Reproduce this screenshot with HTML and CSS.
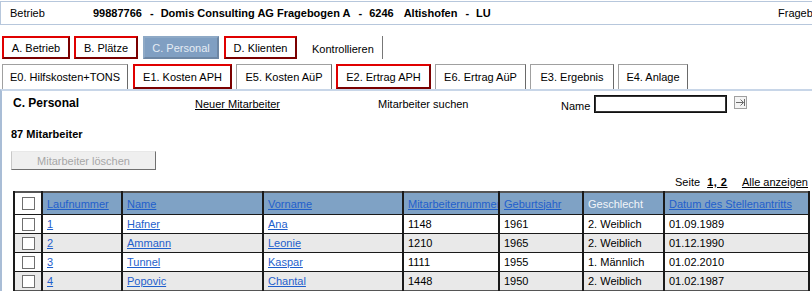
FILE: index.html
```html
<!DOCTYPE html>
<html lang="de">
<head>
    <meta charset="UTF-8">
    <title>C. Personal</title>
    <link rel="stylesheet" href="styles.css">
</head>
<body>
    <!-- Betrieb header -->
    <div class="topbar">
        <span class="top-label">Betrieb</span>
        <span class="top-info">
            <span>99887766</span><span class="sep">-</span><span>Domis Consulting AG Fragebogen A</span><span class="sep">-</span><span class="plz">6246</span><span>Altishofen</span><span class="sep">-</span><span>LU</span>
        </span>
        <span class="top-right">Fragebogen</span>
    </div>

    <!-- main tabs -->
    <div class="nav">
        <a class="tab tab-red tab-betrieb">A. Betrieb</a>
        <a class="tab tab-red tab-plaetze">B. Plätze</a>
        <a class="tab tab-active tab-personal">C. Personal</a>
        <a class="tab tab-red tab-klienten">D. Klienten</a>
        <a class="tab tab-plain">Kontrollieren</a>
    </div>

    <!-- sub tabs -->
    <div class="subnav">
        <a class="subtab sub-e0">E0. Hilfskosten+TONS</a>
        <a class="subtab subtab-red sub-e1">E1. Kosten APH</a>
        <a class="subtab sub-e5">E5. Kosten AüP</a>
        <a class="subtab subtab-red sub-e2">E2. Ertrag APH</a>
        <a class="subtab sub-e6">E6. Ertrag AüP</a>
        <a class="subtab sub-e3">E3. Ergebnis</a>
        <a class="subtab sub-e4">E4. Anlage</a>
    </div>

    <div class="panel">
        <div class="toolbar">
            <span class="title">C. Personal</span>
            <a class="plain-link" href="#">Neuer Mitarbeiter</a>
            <span>Mitarbeiter suchen</span>
            <span class="search">
                <label for="name">Name</label>
                <input type="text" id="name">
                <button class="go" type="button">
                    <svg width="13" height="13" viewBox="0 0 13 13">
                        <rect x="0.5" y="0.5" width="12" height="12" fill="#f4f4f4" stroke="#a0a0a0"/>
                        <path d="M2 6.5h7.5M6.5 3.5l3 3-3 3M10.5 3v7" fill="none" stroke="#6a6a6a" stroke-width="1"/>
                    </svg>
                </button>
            </span>
        </div>

        <div class="count">87 Mitarbeiter</div>

        <button class="delete" type="button" disabled>Mitarbeiter löschen</button>

        <div class="pager">
            Seite <a class="plain-link pages" href="#">1, 2</a>
            <a class="plain-link all" href="#">Alle anzeigen</a>
        </div>

        <table class="staff">
            <colgroup>
                <col class="w-check">
                <col class="w-lauf">
                <col class="w-name">
                <col class="w-vor">
                <col class="w-nr">
                <col class="w-jahr">
                <col class="w-ges">
                <col>
            </colgroup>
            <thead>
                <tr>
                    <th class="check"><span class="box"></span></th>
                    <th><a href="#">Laufnummer</a></th>
                    <th><a href="#">Name</a></th>
                    <th><a href="#">Vorname</a></th>
                    <th><a href="#">Mitarbeiternummer</a></th>
                    <th><a href="#">Geburtsjahr</a></th>
                    <th>Geschlecht</th>
                    <th><a href="#">Datum des Stellenantritts</a></th>
                </tr>
            </thead>
            <tbody>
                <tr>
                    <td class="check"><span class="box"></span></td>
                    <td><a href="#">1</a></td>
                    <td><a href="#">Hafner</a></td>
                    <td><a href="#">Ana</a></td>
                    <td>1148</td>
                    <td>1961</td>
                    <td>2. Weiblich</td>
                    <td>01.09.1989</td>
                </tr>
                <tr class="alt">
                    <td class="check"><span class="box"></span></td>
                    <td><a href="#">2</a></td>
                    <td><a href="#">Ammann</a></td>
                    <td><a href="#">Leonie</a></td>
                    <td>1210</td>
                    <td>1965</td>
                    <td>2. Weiblich</td>
                    <td>01.12.1990</td>
                </tr>
                <tr>
                    <td class="check"><span class="box"></span></td>
                    <td><a href="#">3</a></td>
                    <td><a href="#">Tunnel</a></td>
                    <td><a href="#">Kaspar</a></td>
                    <td>1111</td>
                    <td>1955</td>
                    <td>1. Männlich</td>
                    <td>01.02.2010</td>
                </tr>
                <tr class="alt">
                    <td class="check"><span class="box"></span></td>
                    <td><a href="#">4</a></td>
                    <td><a href="#">Popovic</a></td>
                    <td><a href="#">Chantal</a></td>
                    <td>1448</td>
                    <td>1950</td>
                    <td>2. Weiblich</td>
                    <td>01.02.1987</td>
                </tr>
            </tbody>
        </table>
    </div>
</body>
</html>
```

FILE: styles.css
```css
body {
    font-family: 'Liberation Sans', Arial, sans-serif;
    font-size: 11px;
    color: #000;
    background-color: #fff;
    margin: 0;
    overflow: hidden;
}

a {
    color: #000;
    text-decoration: none;
    cursor: pointer;
}

/* header */
.topbar {
    display: grid;
    grid-template-columns: 92px 685px auto;
    align-items: center;
    height: 22px;
    margin-top: 1px;
    border: 1px solid #b7c7dc;
    border-right: none;
    white-space: nowrap;
    overflow: hidden;
}

.top-label {
    padding-left: 9px;
}

.top-info {
    font-weight: bold;
}

.sep {
    margin: 0 7px 0 8px;
}

.plz {
    margin-right: 10px;
}

/* main tabs */
.nav {
    display: flex;
    align-items: stretch;
    height: 23px;
    margin-top: 11px;
    padding-left: 2px;
}

.tab {
    display: flex;
    align-items: center;
    justify-content: center;
    box-sizing: border-box;
    border: 2px solid;
    border-color: #e00000 #7a0000 #7a0000 #e00000;
}

.tab-betrieb { width: 68px; }
.tab-plaetze { width: 64px; margin-left: 4px; }
.tab-personal { width: 76px; margin-left: 5px; }
.tab-klienten { width: 73px; margin-left: 5px; }

.tab-active {
    background-color: #809fc2;
    color: #e6ecf4;
    border-color: #8ea9c6 #6d86a3 #6d86a3 #8ea9c6;
}

.tab-plain {
    border: none;
    border-right: 1px solid #777;
    margin-left: 11px;
    padding: 3px 8px 0 4px;
}

/* sub tabs */
.subnav {
    display: flex;
    align-items: stretch;
    gap: 4px;
    height: 25px;
    margin-top: 5px;
    padding-left: 2px;
}

.subtab {
    display: flex;
    align-items: center;
    justify-content: center;
    box-sizing: border-box;
    border: 1px solid #a0a0a0;
    border-right-color: #6a6a6a;
    border-bottom: none;
}

.subtab-red {
    border: 2px solid;
    border-color: #e00000 #7a0000 #7a0000 #e00000;
}

.sub-e0 { width: 126px; }
.sub-e1 { width: 99px; margin-left: 1px; }
.sub-e5 { width: 96px; }
.sub-e2 { width: 95px; }
.sub-e6 { width: 91px; }
.sub-e3 { width: 84px; }
.sub-e4 { width: 70px; }

/* content panel */
.panel {
    border-top: 2px solid #c8d6e8;
    border-left: 2px solid #a9bdd6;
    padding: 3px 0 0 9px;
    min-height: 200px;
}

.toolbar {
    display: grid;
    grid-template-columns: 184px 183px 183px auto;
    align-items: center;
    height: 20px;
}

.title {
    font-weight: bold;
    font-size: 12px;
    padding-left: 2px;
    margin-top: -2px;
}

.plain-link {
    text-decoration: underline;
}

.search {
    display: flex;
    align-items: center;
}

.search label {
    padding-top: 3px;
    margin-right: 4px;
}

.search input {
    width: 129px;
    height: 14px;
    padding: 1px;
    border: 1px solid #111;
    outline: 1px solid #333;
    outline-offset: -2px;
    margin: 0 7px 0 0;
    font-size: 11px;
}

.go {
    border: none;
    background: none;
    padding: 0;
    margin: -4px 0 0 0;
    line-height: 0;
}

.count {
    font-weight: bold;
    margin-top: 12px;
    height: 16px;
    line-height: 16px;
}

.delete {
    display: block;
    margin-top: 9px;
    width: 145px;
    height: 19px;
    padding: 0;
    background-color: #efefef;
    color: #a6a6a6;
    font-family: 'Liberation Sans', Arial, sans-serif;
    font-size: 11px;
    border: 1px solid;
    border-color: #e8e8e8 #707070 #707070 #c8c8c8;
}

.pager {
    text-align: right;
    padding-right: 4px;
    margin-top: 5px;
    height: 14px;
    line-height: 14px;
}

.pages {
    font-weight: bold;
    letter-spacing: 0.5px;
    margin: 0 12px 0 4px;
}

/* staff table */
.staff {
    border-collapse: collapse;
    table-layout: fixed;
    margin: 2px 0 0 2px;
    width: 797px;
    border: 2px solid #555;
}

.w-check { width: 28px; }
.w-lauf { width: 80px; }
.w-name { width: 141px; }
.w-vor { width: 140px; }
.w-nr { width: 96px; }
.w-jahr { width: 84px; }
.w-ges { width: 81px; }

.staff th,
.staff td {
    border: 1px solid #1a1a1a;
    border-left-width: 2px;
    border-right-width: 2px;
    height: 18px;
    padding: 0 4px;
    text-align: left;
    white-space: nowrap;
    overflow: hidden;
    font-weight: normal;
}

.staff th {
    background-color: #7fa2c5;
    color: #f2f5f9;
    height: 21px;
}

.staff a {
    color: #1f5fcc;
    text-decoration: underline;
}

.staff tr.alt td {
    background-color: #e9e9e9;
}

.staff .check {
    text-align: center;
    padding: 0;
}

.staff th.check {
    background-color: #fff;
}

.box {
    display: inline-block;
    width: 11px;
    height: 11px;
    border: 1px solid #6f6f6f;
    background-color: #fff;
    vertical-align: middle;
}
```
